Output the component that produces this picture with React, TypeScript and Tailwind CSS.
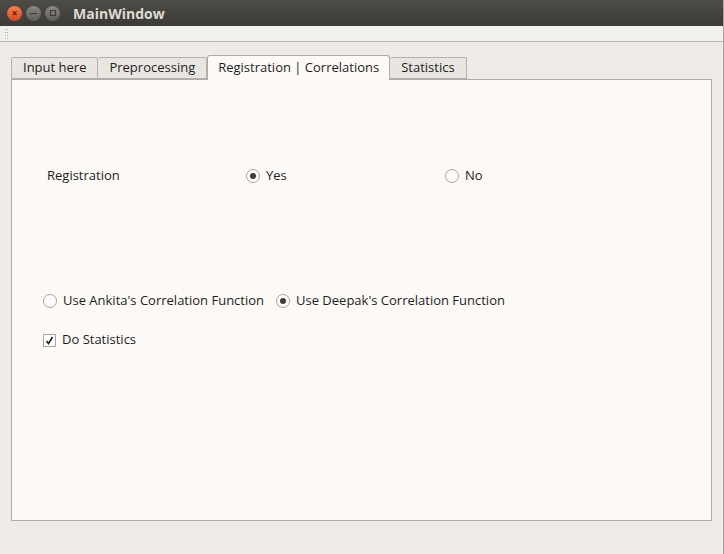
import React from 'react';

const font = { fontFamily: '"Open Sans", "DejaVu Sans", sans-serif' };

function Radio({ checked }: { checked?: boolean }) {
  return (
    <span className="w-[14px] h-[14px] rounded-full border border-[#a8a49f] bg-[#fdfcfb] flex items-center justify-center shrink-0">
      {checked && <span className="w-[6px] h-[6px] rounded-full bg-[#3c3b37]" />}
    </span>
  );
}

function Check() {
  return (
    <span className="w-[13px] h-[13px] border border-[#a8a49f] bg-white flex items-center justify-center shrink-0">
      <svg width="9" height="9" viewBox="0 0 9 9">
        <path d="M1.5 5 L3.5 7.5 L7.5 1" fill="none" stroke="#222" strokeWidth="1.6" />
      </svg>
    </span>
  );
}

const tabs = ['Input here', 'Preprocessing', 'Registration | Correlations', 'Statistics'];

export default function App() {
  return (
    <div className="w-[724px] h-[554px] bg-[#efebe7] flex flex-col border-r border-[#a6a39e] text-[13px] text-[#3c3b37]" style={font}>
      {/* title bar */}
      <div className="h-[26px] bg-gradient-to-b from-[#4d4c47] to-[#3b3a36] flex items-center pl-[7px] shrink-0">
        <span className="w-[15px] h-[15px] rounded-full bg-gradient-to-b from-[#f48052] to-[#d9471a] flex items-center justify-center text-[10px] leading-none text-[#5a1c06] font-bold">×</span>
        <span className="ml-[4px] w-[15px] h-[15px] rounded-full bg-gradient-to-b from-[#8a8880] to-[#5f5d57] flex items-center justify-center">
          <span className="w-[7px] h-[1px] bg-[#3a3935]" />
        </span>
        <span className="ml-[4px] w-[15px] h-[15px] rounded-full bg-gradient-to-b from-[#8a8880] to-[#5f5d57] flex items-center justify-center">
          <span className="w-[6px] h-[6px] border border-[#3a3935]" />
        </span>
        <span className="ml-[13px] font-bold text-[14px] text-[#dfdbd2]">MainWindow</span>
      </div>
      {/* toolbar strip */}
      <div className="h-[16px] border-b border-[#bcb8b3] bg-[#f2f0ed] flex items-center pl-[5px] shrink-0">
        <div className="grid grid-cols-2 gap-x-[1px] gap-y-[2px]">
          {Array.from({ length: 8 }).map((_, i) => (
            <span key={i} className="w-[1px] h-[1px] bg-[#b8b4ae]" />
          ))}
        </div>
      </div>
      {/* content */}
      <div className="flex-1 flex flex-col pt-[12px] px-[11px] pb-[33px]">
        <div className="flex items-end h-[25px] relative z-10">
          {tabs.map((t, i) =>
            i === 2 ? (
              <div key={t} className="h-[25px] -mb-[1px] px-[10px] flex items-center border border-b-0 border-[#aeaaa5] rounded-t-[3px] bg-[#fdf9f6] text-[#1f1e1c]">
                {t}
              </div>
            ) : (
              <div
                key={t}
                className={`h-[22px] px-[11px] flex items-center border border-[#b5b1ac] bg-[#e9e5e1] rounded-t-[2px] text-[#1f1e1c] ${i === 1 || i === 3 ? 'border-l-0' : ''} ${i === 3 ? 'px-[10px]' : ''}`}
              >
                {t}
              </div>
            )
          )}
        </div>
        <div className="flex-1 border border-[#aeaaa5] bg-[#fdf9f6] flex flex-col text-[#1f1e1c]">
          <div className="flex items-center mt-[88px] pl-[35px] h-[16px]">
            <span className="w-[199px]">Registration</span>
            <span className="w-[199px] flex items-center gap-[6px]">
              <Radio checked />
              <span>Yes</span>
            </span>
            <span className="flex items-center gap-[6px]">
              <Radio />
              <span>No</span>
            </span>
          </div>
          <div className="flex items-center mt-[109px] pl-[31px] h-[16px]">
            <span className="w-[233px] flex items-center gap-[6px]">
              <Radio />
              <span>Use Ankita's Correlation Function</span>
            </span>
            <span className="flex items-center gap-[6px]">
              <Radio checked />
              <span>Use Deepak's Correlation Function</span>
            </span>
          </div>
          <div className="flex items-center mt-[23px] pl-[31px] h-[16px] gap-[6px]">
            <Check />
            <span>Do Statistics</span>
          </div>
        </div>
      </div>
    </div>
  );
}
